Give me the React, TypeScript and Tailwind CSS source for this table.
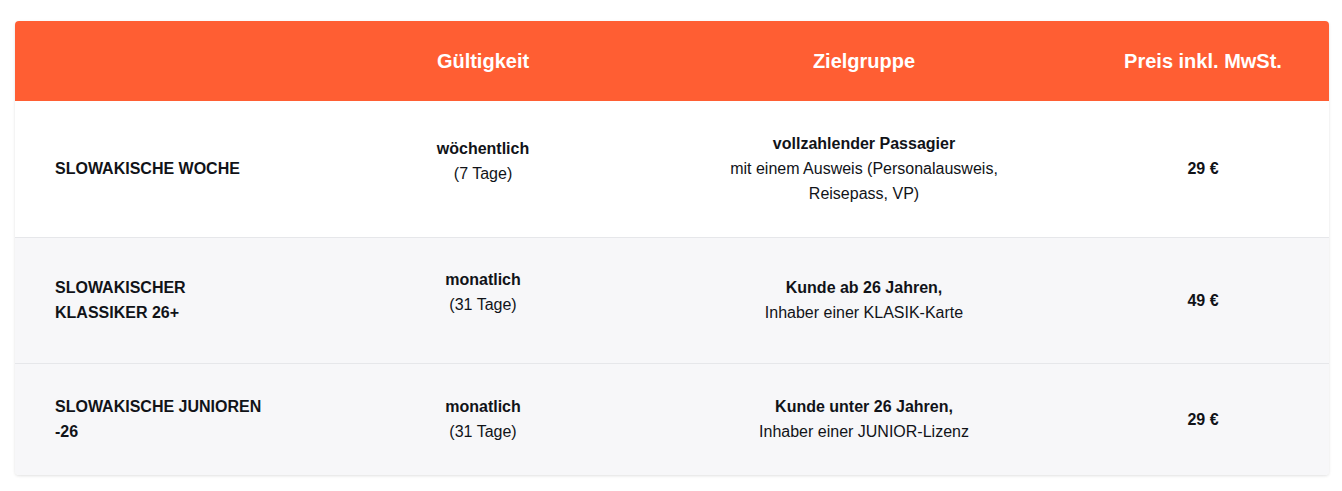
import React from "react";

type Pass = {
  name: string;
  validity: string;
  days: string;
  validityGap: boolean;
  groupBold: string;
  groupText: string;
  price: string;
  height: string;
  shaded: boolean;
};

const PASSES: Pass[] = [
  {
    name: "SLOWAKISCHE WOCHE",
    validity: "wöchentlich",
    days: "(7 Tage)",
    validityGap: true,
    groupBold: "vollzahlender Passagier",
    groupText: "mit einem Ausweis (Personalausweis, Reisepass, VP)",
    price: "29 €",
    height: "h-[136px]",
    shaded: false,
  },
  {
    name: "SLOWAKISCHER KLASSIKER 26+",
    validity: "monatlich",
    days: "(31 Tage)",
    validityGap: true,
    groupBold: "Kunde ab 26 Jahren,",
    groupText: "Inhaber einer KLASIK-Karte",
    price: "49 €",
    height: "h-[126px]",
    shaded: true,
  },
  {
    name: "SLOWAKISCHE JUNIOREN -26",
    validity: "monatlich",
    days: "(31 Tage)",
    validityGap: false,
    groupBold: "Kunde unter 26 Jahren,",
    groupText: "Inhaber einer JUNIOR-Lizenz",
    price: "29 €",
    height: "h-[112px]",
    shaded: true,
  },
];

export default function App() {
  return (
    <div className="min-h-screen bg-white pt-[21px] pl-[15px] font-['Liberation_Sans',Arial,sans-serif] text-[#111318]">
      <div className="w-[1314px] overflow-hidden rounded-[4px] shadow-[0_1px_3px_rgba(0,0,0,0.12)]">
        <table className="w-full table-fixed border-collapse text-[16px] leading-[25px]">
          <colgroup>
            <col className="w-[300px]" />
            <col className="w-[336px]" />
            <col className="w-[426px]" />
            <col className="w-[252px]" />
          </colgroup>
          <thead>
            <tr className="h-[80px] bg-[#ff5e33] text-white">
              <th className="px-10"></th>
              <th className="px-6 text-center text-[20px] font-bold">Gültigkeit</th>
              <th className="px-6 text-center text-[20px] font-bold">Zielgruppe</th>
              <th className="px-4 text-center text-[20px] font-bold">Preis inkl. MwSt.</th>
            </tr>
          </thead>
          <tbody>
            {PASSES.map((p, i) => (
              <tr
                key={p.name}
                className={`${p.height} ${p.shaded ? "bg-[#f7f7f9]" : "bg-white"} ${i > 0 ? "border-t border-[#e6e7ea]" : ""}`}
              >
                <td className="pl-10 pr-[50px] align-middle font-bold">{p.name}</td>
                <td className="px-10 text-center align-middle">
                  {/* the first two rows carry an empty paragraph gap under the days */}
                  <p className={p.validityGap ? "mb-4" : ""}>
                    <span className="block font-bold">{p.validity}</span>
                    <span className="block">{p.days}</span>
                  </p>
                </td>
                <td className="px-10 text-center align-middle">
                  <span className="block font-bold">{p.groupBold}</span>
                  <span className="block">{p.groupText}</span>
                </td>
                <td className="px-10 text-center align-middle font-bold">{p.price}</td>
              </tr>
            ))}
          </tbody>
        </table>
      </div>
    </div>
  );
}
